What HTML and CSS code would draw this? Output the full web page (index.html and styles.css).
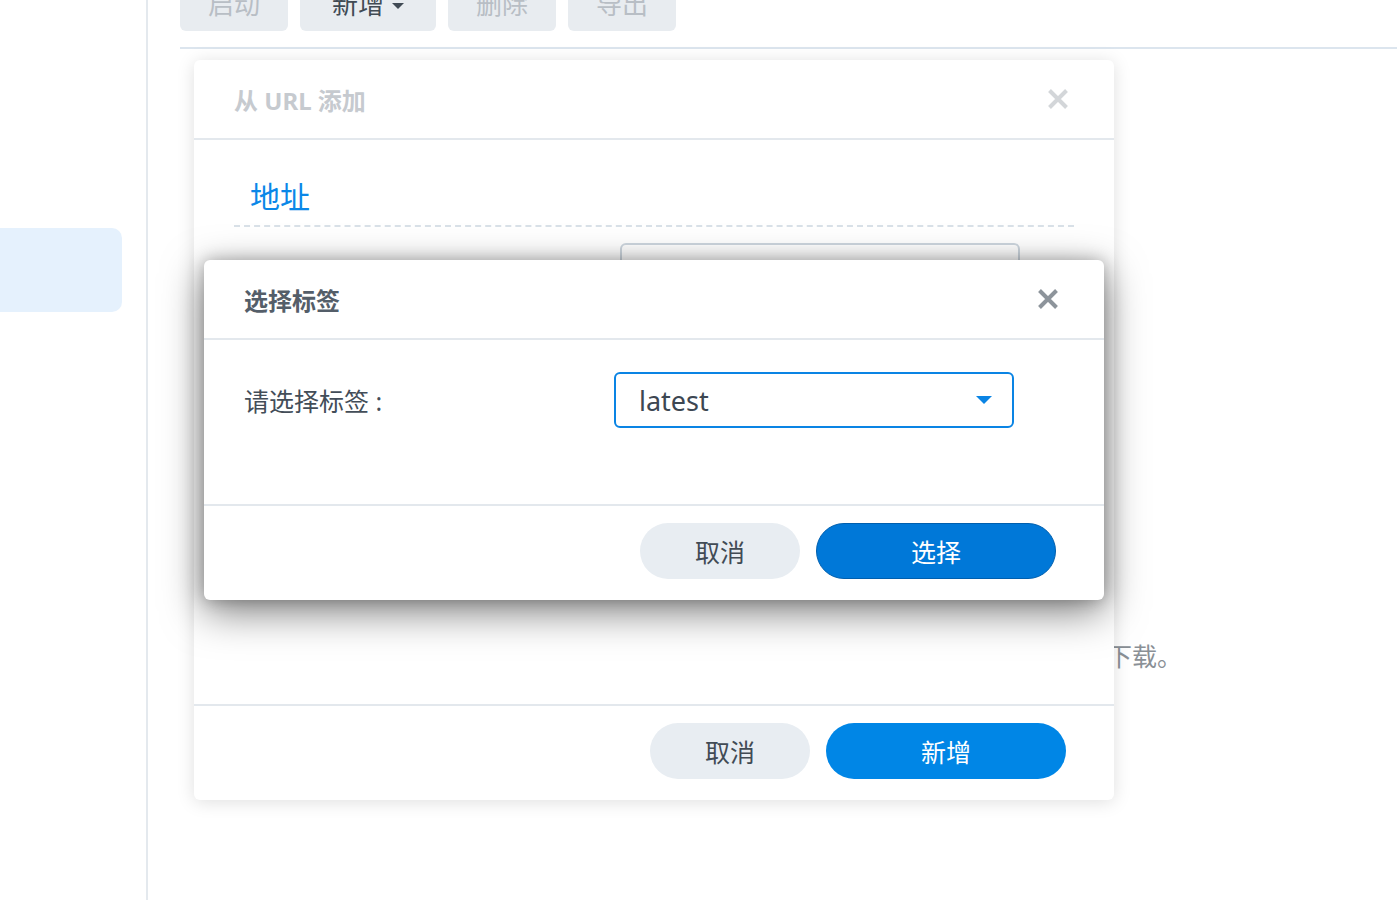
FILE: index.html
```html
<!DOCTYPE html>
<html lang="zh-CN">
<head>
<meta charset="utf-8">
<title>从 URL 添加</title>
<link rel="stylesheet" href="styles.css">
</head>
<body>
<div class="app">
  <aside class="sidebar">
    <div class="side-item active"></div>
  </aside>
  <main class="main">
    <div class="toolbar">
      <button class="tb-btn disabled w108">启动</button>
      <button class="tb-btn w136">新增 <span class="tb-caret"></span></button>
      <button class="tb-btn disabled w108">删除</button>
      <button class="tb-btn disabled w108">导出</button>
    </div>
    <div class="bg-note">下载。</div>
  </main>
</div>

<div class="dialog outer">
  <div class="dlg-head">
    <div class="dlg-title">从 URL 添加</div>
    <svg class="dlg-close" width="22" height="22" viewBox="0 0 22 22"><path d="M2.5 2.5L19.5 19.5M19.5 2.5L2.5 19.5" stroke="currentColor" stroke-width="4" stroke-linecap="butt"/></svg>
  </div>
  <div class="outer-body">
    <div class="section-title">地址</div>
    <div class="dashed"></div>
    <div class="outer-row"><div class="ghost-input"></div></div>
  </div>
  <div class="dlg-foot outer-foot">
    <button class="btn btn-cancel">取消</button>
    <button class="btn btn-primary">新增</button>
  </div>
</div>

<div class="dialog inner">
  <div class="dlg-head">
    <div class="dlg-title">选择标签</div>
    <svg class="dlg-close" width="22" height="22" viewBox="0 0 22 22"><path d="M2.5 2.5L19.5 19.5M19.5 2.5L2.5 19.5" stroke="currentColor" stroke-width="4" stroke-linecap="butt"/></svg>
  </div>
  <div class="inner-body">
    <div class="form-row">
      <label class="form-label">请选择标签 :</label>
      <div class="select">
        <span class="select-value">latest</span>
        <span class="select-caret"></span>
      </div>
    </div>
  </div>
  <div class="dlg-foot inner-foot">
    <button class="btn btn-cancel">取消</button>
    <button class="btn btn-select">选择</button>
  </div>
</div>
</body>
</html>
```
FILE: styles.css
```css
* { box-sizing: border-box; }
html, body { margin: 0; padding: 0; }
body {
  width: 1397px;
  height: 900px;
  overflow: hidden;
  background: #ffffff;
  font-family: "Noto Sans", "Noto Sans CJK SC", sans-serif;
  color: #414b55;
  position: relative;
}
button { font-family: inherit; border: none; cursor: pointer; }

.app { display: flex; height: 900px; }
.sidebar {
  width: 148px;
  flex: none;
  border-right: 2px solid #e4e9ee;
  padding-top: 228px;
}
.side-item.active {
  width: 122px;
  height: 84px;
  background: #e5f1fd;
  border-radius: 0 10px 10px 0;
}

.main { flex: 1; padding-left: 32px; position: relative; }
.toolbar {
  display: flex;
  gap: 12px;
  margin-top: -13px;
  padding-bottom: 16px;
  border-bottom: 2px solid #dce5ee;
}
.tb-btn {
  height: 44px;
  border-radius: 6px;
  background: #e8ecf0;
  font-size: 26px;
  line-height: 30px;
  color: #414b55;
  display: flex;
  align-items: flex-start;
  justify-content: center;
  gap: 8px;
  padding: 2px 0 0 0;
}
.tb-btn.disabled { color: #b8bec5; }
.w108 { width: 108px; }
.w136 { width: 136px; }
.tb-caret {
  width: 0; height: 0;
  border-left: 6px solid transparent;
  border-right: 6px solid transparent;
  border-top: 6px solid #414b55;
  margin-top: 14px;
}
.bg-note {
  position: absolute;
  left: 959px;
  top: 638px;
  font-size: 25px;
  color: #8a9096;
  line-height: 36px;
}

.dialog {
  position: absolute;
  background: #ffffff;
  border-radius: 6px;
  display: flex;
  flex-direction: column;
}
.outer {
  left: 194px; top: 60px; width: 920px; height: 740px;
  box-shadow: 0 2px 18px rgba(0,0,0,0.13);
}
.inner {
  left: 204px; top: 260px; width: 900px; height: 340px;
  box-shadow: 0 12px 40px rgba(0,0,0,0.5), 0 0 16px rgba(0,0,0,0.25);
}
.dlg-head {
  height: 80px;
  flex: none;
  display: flex;
  align-items: center;
  justify-content: space-between;
  padding: 0 45px 0 40px;
  border-bottom: 2px solid #e3e8ed;
}
.dlg-title { font-size: 24px; font-weight: 700; }
.outer .dlg-title { color: #c6cacf; }
.inner .dlg-title { color: #545e69; }
.outer .dlg-close { color: #d3d6d9; }
.inner .dlg-close { color: #8d949b; }

.outer-body { flex: 1; padding: 0 40px; }
.section-title {
  font-size: 30px;
  color: #0a87e8;
  padding: 35px 0 0 16px;
  line-height: 44px;
}
.dashed {
  margin-top: 6px;
  border-top: 2px dashed #d9e1e8;
}
.outer-row { padding: 16px 0 0 386px; }
.ghost-input {
  width: 400px; height: 56px;
  border: 2px solid #cdd6de;
  border-radius: 6px;
}

.dlg-foot {
  flex: none;
  border-top: 2px solid #e3e8ed;
  display: flex;
  justify-content: flex-end;
  align-items: flex-start;
  gap: 16px;
  padding: 17px 48px 0 0;
}
.outer-foot { height: 96px; }
.inner-foot { height: 96px; }
.btn {
  height: 56px;
  border-radius: 28px;
  font-size: 25px;
  display: flex;
  align-items: center;
  justify-content: center;
}
.btn-cancel { width: 160px; background: #e8edf2; color: #414b55; }
.btn-primary { width: 240px; background: #0086e6; color: #ffffff; }
.btn-select {
  width: 240px; background: #0078d8; color: #ffffff;
  border: 1px solid #005fae;
}

.inner-body { flex: 1; padding: 32px 40px 0 40px; }
.form-row { display: flex; align-items: center; }
.form-label {
  width: 370px;
  font-size: 25px;
  color: #434d58;
}
.select {
  width: 400px; height: 56px;
  border: 2px solid #0a84e4;
  border-radius: 6px;
  display: flex;
  align-items: center;
  justify-content: space-between;
  padding: 0 20px 0 23px;
}
.select-value { font-size: 27px; color: #3d4752; }
.select-caret {
  width: 0; height: 0;
  border-left: 8px solid transparent;
  border-right: 8px solid transparent;
  border-top: 8px solid #0a84e4;
}
```
